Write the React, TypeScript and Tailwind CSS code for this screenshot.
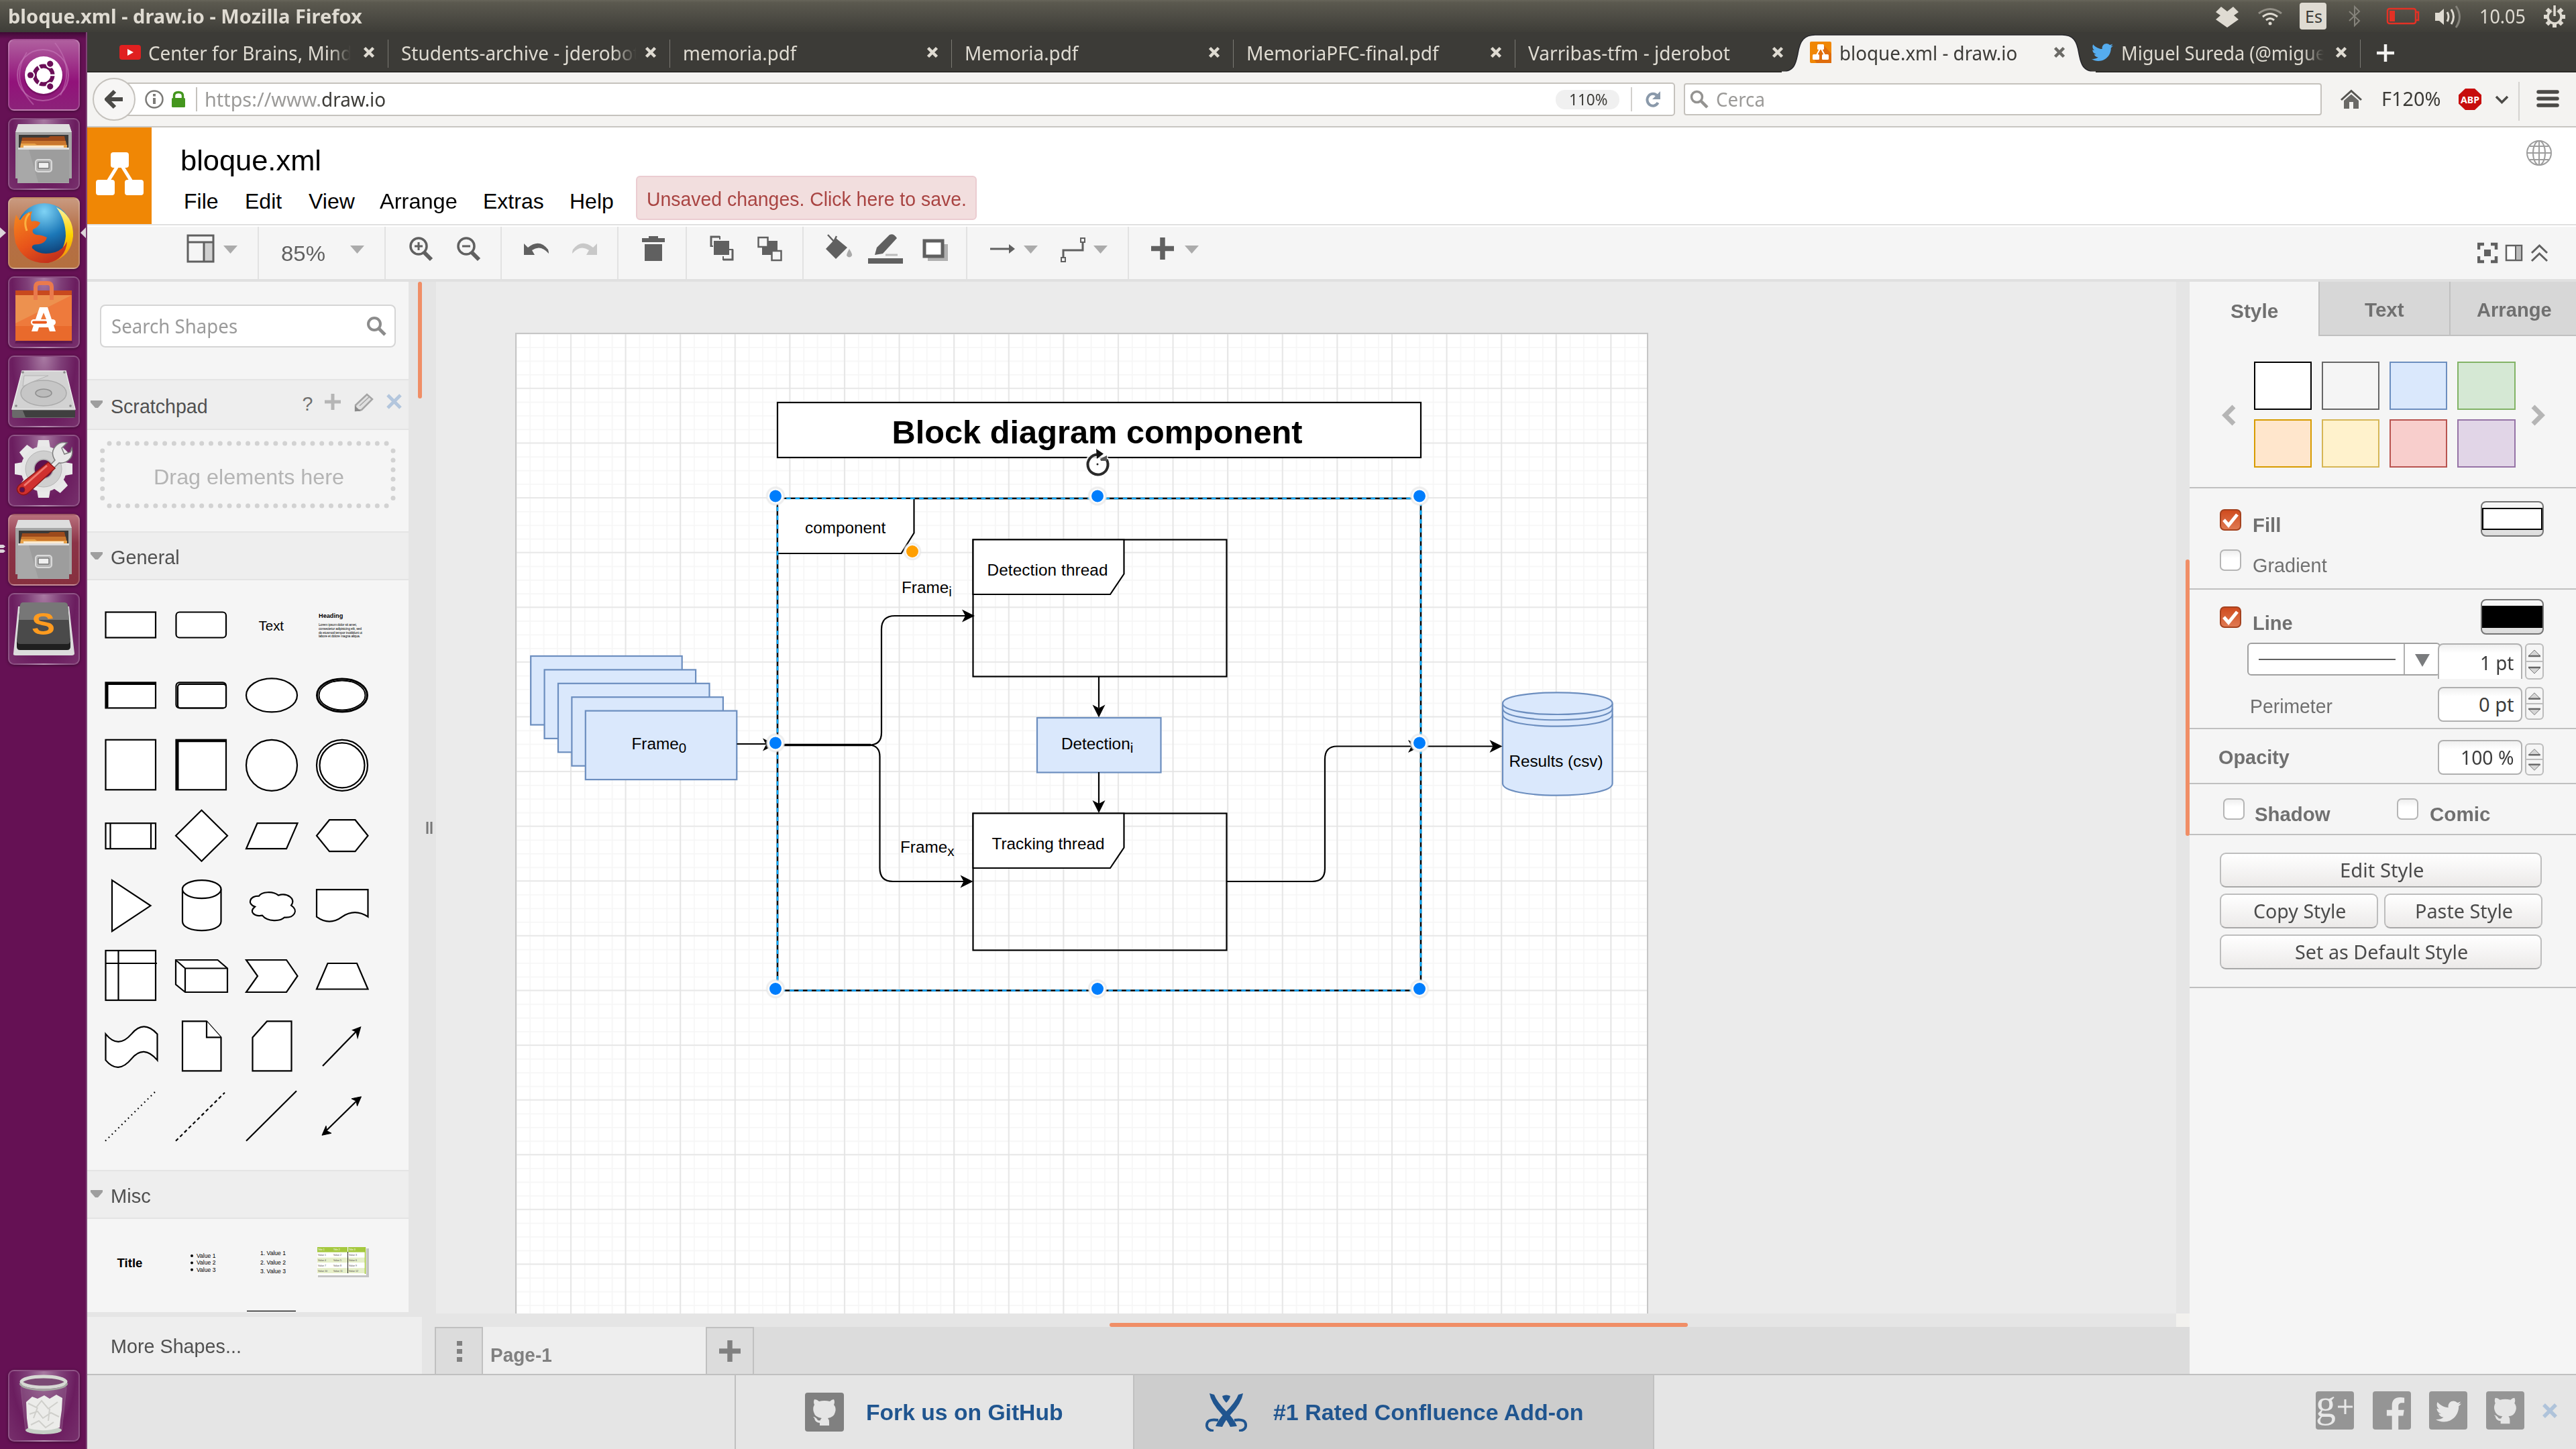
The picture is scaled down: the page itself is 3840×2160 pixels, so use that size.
import React, { useLayoutEffect, useRef, useState } from "react";
import { FaTwitter, FaFacebookF } from "react-icons/fa";

const UB = "font-['Noto_Sans',sans-serif]";
const AR = "font-['Liberation_Sans',sans-serif]";

/* Text squeezed or stretched to a given ink width. */
function Fit({ w, className = "", children }: { w: number; className?: string; children: React.ReactNode }) {
  const ref = useRef<HTMLSpanElement>(null);
  const [s, setS] = useState(1);
  useLayoutEffect(() => {
    if (ref.current && ref.current.offsetWidth) setS((w + 2) / ref.current.offsetWidth);
  }, [w]);
  return (
    <span className={"block shrink-0 whitespace-nowrap " + className} style={{ width: w }}>
      <span ref={ref} className="inline-block origin-left" style={{ transform: `scaleX(${s})` }}>
        {children}
      </span>
    </span>
  );
}

/* ---------- Launcher ---------- */

function Tile({ tint, children }: { tint: string; children: React.ReactNode }) {
  return (
    <div className={"ml-[12px] h-[107px] w-[107px] shrink-0 rounded-[9px] border-2 border-white/20 shadow-[0_1px_4px_rgba(0,0,0,0.4)] " + tint}>
      <svg viewBox="2 2 103 103" className="block h-full w-full">{children}</svg>
    </div>
  );
}

const glass = "bg-[radial-gradient(ellipse_at_50%_0%,#a97ba3_0%,#7f3f78_35%,#6b1d5f_65%,#77306c_100%)]";

function Cabinet() {
  return (
    <>
      <path d="M15 9 H91 L95 22 V90 H11 V22Z" fill="#a5a5a5" />
      <path d="M15 9 H91 L95 21 H11Z" fill="#dedede" />
      <rect x="16" y="25" width="74" height="30" fill="#3c3a38" />
      <path d="M21 29 H60 L63 27 H84 L87 40 H19Z" fill="#9c4a1c" />
      <path d="M20 34 H86 L88 44 H18Z" fill="#c9762e" />
      <path d="M19 38 H40 L43 40 H88 V48 H18Z" fill="#e8a34b" />
      <path d="M23 41 H83 V44 H23Z" fill="#fbe9d0" />
      <path d="M15 44 H91 V97 H14Z" fill="#a8a8a8" />
      <path d="M15 44 H91 V47 H15Z" fill="#dcdcdc" />
      <path d="M31 47 L45 96 H91 V47Z" fill="#989898" opacity="0.7" />
      <rect x="41" y="62" width="24" height="18" rx="4" fill="#b5b5b5" stroke="#dadada" strokeWidth="2" />
      <rect x="45" y="66" width="16" height="9" rx="1" fill="#f0f0f0" stroke="#777" strokeWidth="1.5" />
    </>
  );
}

function Launcher() {
  const teeth = [0, 45, 90, 135, 180, 225, 270, 315];
  return (
    <div className="flex w-[130px] shrink-0 flex-col border-r-2 border-[#7f4576] bg-[#651154] bg-[linear-gradient(#3e0a34_0px,#651154_10px)] pt-[10px]">
      <div className="flex flex-col gap-[11px]">
        <Tile tint="bg-[linear-gradient(#b0609f,#92127a_60%,#8c2279)]">
          <ellipse cx="52" cy="54" rx="38" ry="38" fill="none" stroke="#c77bb9" strokeWidth="2" opacity="0.6" />
          <path d="M70 6 Q100 44 78 84 M28 20 Q2 60 38 98" fill="none" stroke="#c77bb9" strokeWidth="2" opacity="0.5" />
          <circle cx="53" cy="56" r="29" fill="#5a0b4b" opacity="0.4" />
          <circle cx="53" cy="54" r="28" fill="#fff" />
          <circle cx="53" cy="54" r="13.5" fill="none" stroke="#6b0f58" strokeWidth="6" />
          <path d="M53 54 L66 54 H76 M53 54 L43 36 M53 54 L43 72" stroke="#fff" strokeWidth="2.5" />
          {[180, 60, 300].map((a) => (
            <g key={a} transform={`rotate(${a} 53 54)`}>
              <circle cx="72.5" cy="54" r="6.5" fill="#fff" />
              <circle cx="72.5" cy="54" r="4.6" fill="#6b0f58" />
            </g>
          ))}
        </Tile>
        <Tile tint={glass}><Cabinet /></Tile>
        <div className="relative">
          <Tile tint="bg-[linear-gradient(#c99a80,#b56f47_45%,#b4703f)]">
            <defs>
              <radialGradient id="globe" cx="0.5" cy="0.15" r="0.9"><stop offset="0" stopColor="#7fd3f5" /><stop offset="0.5" stopColor="#1c78b8" /><stop offset="1" stopColor="#0b2f63" /></radialGradient>
              <linearGradient id="fox" x1="0" y1="0" x2="0.6" y2="1"><stop offset="0" stopColor="#f58a1f" /><stop offset="0.6" stopColor="#e8541a" /><stop offset="1" stopColor="#c5331c" /></linearGradient>
              <linearGradient id="tail" x1="0" y1="0" x2="0" y2="1"><stop offset="0" stopColor="#fff2a0" /><stop offset="0.5" stopColor="#fdd400" /><stop offset="1" stopColor="#f08a10" /></linearGradient>
            </defs>
            <circle cx="54" cy="50" r="41" fill="url(#globe)" />
            <path d="M72 15 Q98 28 97 58 Q94 88 66 96 Q84 80 86 58 Q86 34 72 15Z" fill="url(#tail)" />
            <path d="M12 26 Q15 32 18 34 Q26 22 36 21 Q32 30 35 36 Q43 34 48 38 Q45 45 37 48 Q35 54 42 56 Q50 56 58 60 Q56 68 46 70 Q34 70 36 76 Q48 88 70 82 Q82 78 88 66 Q86 92 60 98 Q24 100 11 68 Q6 44 12 26Z" fill="url(#fox)" />
            <path d="M32 24 Q22 34 28 50" stroke="#fbb040" strokeWidth="3" fill="none" />
          </Tile>
          <svg viewBox="0 0 130 107" className="absolute left-0 top-0 h-[107px] w-[130px]">
            <path d="M0 45 L9 53 L0 61Z M128 45 L120 53 L128 61Z" fill="#dcd5da" />
          </svg>
        </div>
        <Tile tint={glass}>
          <path d="M12 96 H96 V100 H10Z" fill="#4a0d3e" opacity="0.5" />
          <path d="M11 21 H95 V30 H11Z" fill="#c8491e" />
          <path d="M11 28 H95 V96 H11Z" fill="#ee7a3c" />
          <path d="M11 28 H95 L11 70Z" fill="#eda05c" opacity="0.6" />
          <path d="M11 74 H95 V96 H11Z" fill="#e96a2c" />
          <path d="M41 35 V16 Q41 10 47 10 H59 Q65 10 65 16 V35" fill="none" stroke="#ea7a4c" strokeWidth="6" />
          <path d="M47 46 H59 L71 82 H62 L60 76 H46 L44 82 H35Z M53 54 L49 64 H57Z" fill="#fff" fillRule="evenodd" />
          <rect x="34" y="64" width="37" height="9" rx="4.5" fill="#fff" />
          <rect x="36" y="66.5" width="22" height="4" rx="2" fill="#e8591e" />
        </Tile>
        <Tile tint={glass}>
          <path d="M6 80 H100 V90 Q100 93 97 93 H9 Q6 93 6 90Z" fill="#6a6a6a" />
          <path d="M22 82 H100 V92 H26Z" fill="#3f3f3f" />
          <path d="M21 23 H86 L100 80 H6Z" fill="#d2d2d2" stroke="#ececec" strokeWidth="1.5" />
          <ellipse cx="53" cy="56" rx="34" ry="19" fill="#c6c6c6" stroke="#aaa" strokeWidth="1.5" />
          <ellipse cx="53" cy="56" rx="12" ry="6" fill="#bbb" stroke="#8f8f8f" strokeWidth="1.5" />
          <path d="M24 30 H60 L34 40 L22 46Z" fill="#dadada" stroke="#b5b5b5" />
          {[[22, 25], [84, 25], [12, 75], [93, 75]].map(([x, y]) => <circle key={x} cx={x} cy={y} r="1.8" fill="#888" />)}
        </Tile>
        <Tile tint={glass}>
          {teeth.map((a) => <path key={a} transform={`rotate(${a} 53 51)`} d="M43 20 L45 8 H61 L63 20Z" fill="#e9e9e9" />)}
          <circle cx="53" cy="51" r="34" fill="#e6e6e6" />
          <circle cx="53" cy="51" r="27" fill="#cfcfcf" stroke="#b5b5b5" />
          <circle cx="53" cy="51" r="14" fill="#5e124f" stroke="#aaa" strokeWidth="1.5" />
          <path d="M62 46 L70 38 Q62 26 72 16 Q78 10 88 12 L80 20 L84 29 L93 26 L95 20 Q98 32 90 38 Q84 43 76 42 L67 51Z" fill="#e8e8e8" stroke="#7d7d7d" strokeWidth="1.5" />
          <path d="M60 41 L70 50 L31 86 Q24 93 16 87 Q10 80 18 74Z" fill="#d0302f" stroke="#8e1718" strokeWidth="1.5" />
          <path d="M58 46 L24 76" stroke="#f07a70" strokeWidth="3" />
          <circle cx="21" cy="82" r="4" fill="#5e124f" stroke="#8e1718" />
        </Tile>
        <div className="relative">
          <Tile tint="bg-[linear-gradient(#b8707c,#8b3347_40%,#87303f)]"><Cabinet /></Tile>
          <svg viewBox="0 0 130 107" className="absolute left-0 top-0 h-[107px] w-[130px]">
            <path d="M0 46 H5 L8 48.500 L5 51 H0Z M0 53 H5 L8 55.500 L5 58 H0Z" fill="#dcd5da" />
          </svg>
        </div>
        <Tile tint={glass}>
          <path d="M15 20 H91 L99 90 Q99 93 95 93 H11 Q7 93 8 90Z" fill="#dcdcdc" />
          <path d="M13 72 H93 V80 Q93 85 88 85 H18 Q13 85 13 80Z" fill="#1f1f1f" />
          <path d="M22 14 H84 Q88 14 89 18 L93 70 Q93 76 88 76 H18 Q13 76 13 70 L18 18 Q19 14 22 14Z" fill="#4a4a4a" />
          <path d="M22 14 H84 Q88 14 89 18 L91 40 H16 L18 18 Q19 14 22 14Z" fill="#777" />
          <text x="35" y="62" fontSize="46" fontWeight="700" textLength="35" lengthAdjust="spacingAndGlyphs" fill="#ff9b1f" className={AR}>S</text>
        </Tile>
      </div>
      <div className="mb-[11px] mt-auto">
        <Tile tint={glass}>
          <path d="M19 26 L26 90 Q53 100 80 90 L87 26Z" fill="#9a6f95" opacity="0.35" stroke="#b698b2" />
          <ellipse cx="53" cy="90" rx="27" ry="6" fill="#c6cfc6" />
          <path d="M27 48 L36 40 L44 43 L54 38 L62 43 L72 37 L81 42 L80 60 L78 74 L77 86 Q53 94 30 87 L28 72Z" fill="#ececea" />
          <path d="M30 50 L42 56 L50 46 L60 58 L74 48 M32 66 L44 62 L52 72 L64 64 L76 70 M34 82 L46 76 L56 86 L68 78 M44 56 L38 72 M62 58 L60 76" stroke="#cfcfcb" strokeWidth="2" fill="none" />
          <ellipse cx="53" cy="18" rx="33" ry="8" fill="#7b4a74" stroke="#d7d9d4" strokeWidth="5" />
          <path d="M18 20 Q20 29 53 30 Q86 29 88 20" fill="none" stroke="#a5a8a2" strokeWidth="3" />
        </Tile>
      </div>
    </div>
  );
}

/* ---------- System bar ---------- */

function TopBar() {
  return (
    <div className={"flex h-[48px] w-full shrink-0 bg-[linear-gradient(#67655a,#5b594f_8%,#3e3d38)] text-[28.5px] leading-[48px] text-[#dfdbd2] " + UB}>
      <Fit w={526} className="ml-[12px] font-bold">bloque.xml - draw.io - Mozilla Firefox</Fit>
      <svg viewBox="3300 0 128 48" className="ml-auto h-[48px] w-[128px] shrink-0">
        <g fill="#dfdbd2">
          <path d="M3311 10 L3320 17 L3329 10 L3337 18 L3330 23 L3337 29 L3320 41 L3303 29 L3310 23 L3303 18Z" />
          <circle cx="3384" cy="35" r="2.5" />
          <g fill="none" stroke="#dfdbd2" strokeWidth="3">
            <path d="M3378 30 Q3384 25 3390 30" />
            <path d="M3373 25 Q3384 16 3395 25" />
            <path d="M3367 20 Q3384 7 3401 20" opacity="0.45" />
          </g>
        </g>
      </svg>
      <div className="flex h-[40px] w-[40px] shrink-0 items-center justify-center self-center rounded-[4px] bg-[#dfdbd2] text-[25px] leading-[40px] text-[#3c3b37]">
        <Fit w={24}>Es</Fit>
      </div>
      <svg viewBox="3468 0 228 48" className="h-[48px] w-[228px] shrink-0">
        <path d="M3502 17 L3517 31 L3510 38 V10 L3517 17 L3502 31" fill="none" stroke="#84827a" strokeWidth="2" />
        <rect x="3559" y="13" width="42" height="22" rx="3" fill="none" stroke="#e33125" strokeWidth="2.5" />
        <path d="M3602 18 H3605 V30 H3602" fill="none" stroke="#e33125" strokeWidth="2.5" />
        <rect x="3562" y="16" width="8" height="16" fill="#e33125" />
        <path d="M3630 19 H3636 L3643 13 V37 L3636 31 H3630Z" fill="#dfdbd2" />
        <path d="M3648 18 Q3652 25 3648 32 M3654 14 Q3661 25 3654 36" fill="none" stroke="#dfdbd2" strokeWidth="3" />
        <path d="M3661 9 Q3672 25 3661 41" fill="none" stroke="#84827a" strokeWidth="3" />
      </svg>
      <Fit w={67}>10.05</Fit>
      <svg viewBox="3763 0 77 48" className="h-[48px] w-[77px] shrink-0">
        <circle cx="3808" cy="25" r="10" fill="none" stroke="#dfdbd2" strokeWidth="3.5" />
        {[45, 90, 135, 180, 225, 270, 315].map((a) => (
          <rect key={a} x="3805" y="9" width="6" height="5" fill="#dfdbd2" transform={`rotate(${a} 3808 25)`} />
        ))}
        <rect x="3803.5" y="7" width="9" height="10" fill="#504e46" />
        <rect x="3806.3" y="8" width="3.5" height="16" fill="#dfdbd2" />
      </svg>
    </div>
  );
}

/* ---------- Browser tabs ---------- */

function Close({ c = "#dfdbd2" }: { c?: string }) {
  return (
    <svg viewBox="0 0 18 18" className="h-[18px] w-[18px] shrink-0 self-center">
      <path d="M2.5 2.5 L15.5 15.5 M15.5 2.5 L2.5 15.5" stroke={c} strokeWidth="4.5" />
    </svg>
  );
}

function Tab({ title, w, box = 352, icon, fade, last }: { title: string; w: number; box?: number; icon?: React.ReactNode; fade?: boolean; last?: boolean }) {
  return (
    <div className="flex h-[60px] w-[420px] shrink-0 pl-[19px] pr-[20px]">
      {icon}
      <div className={"shrink-0 " + (fade ? "[mask-image:linear-gradient(to_right,black_88%,transparent_98%)]" : "")} style={{ width: box }}>
        <Fit w={w}>{title}</Fit>
      </div>
      <span className="ml-auto flex"><Close /></span>
      {!last && <span className="-mr-[20px] ml-[19px] mt-[11px] h-[42px] w-px bg-[#7b7973]" />}
    </div>
  );
}

function DrawioMark() {
  return (
    <svg viewBox="0 0 32 32" className="h-[32px] w-[32px] shrink-0 self-center">
      <rect width="32" height="32" rx="2" fill="#f08705" />
      <path d="M20 5 L32 18 V32 H10 L6 26Z" fill="#df6c0c" />
      <path d="M16 9 L9 22 M16 9 L23 22" stroke="#fff" strokeWidth="2" />
      <rect x="11" y="4" width="10" height="8" rx="1.5" fill="#fff" />
      <rect x="4" y="19" width="10" height="8" rx="1.5" fill="#fff" />
      <rect x="18" y="19" width="10" height="8" rx="1.5" fill="#fff" />
    </svg>
  );
}

function TabStrip() {
  return (
    <div className={"flex h-[60px] shrink-0 bg-[#3c3b37] pl-[29px] text-[28.5px] leading-[62px] text-[#dfdbd2] shadow-[inset_0_-2px_0_#2b2a26] " + UB}>
      <Tab title="Center for Brains, Mind" w={302} box={308} fade icon={
        <svg viewBox="0 0 32 22" className="mr-[11px] h-[22px] w-[32px] shrink-0 self-center">
          <rect width="32" height="22" rx="4" fill="#e02020" /><path d="M12 6 L21 11 L12 16Z" fill="#fff" />
        </svg>} />
      <Tab title="Students-archive - jderobot" w={354} box={358} fade />
      <Tab title="memoria.pdf" w={167} />
      <Tab title="Memoria.pdf" w={167} />
      <Tab title="MemoriaPFC-final.pdf" w={285} />
      <Tab title="Varribas-tfm - jderobot" w={299} last />
      <div className="relative flex h-[60px] w-[420px] shrink-0 pl-[19px] pr-[20px] text-[#3c3b37]">
        <svg viewBox="2656 48 468 60" className="absolute -left-[23px] top-0 h-[60px] w-[468px]">
          <path d="M2654 108 C2676 106 2677 94 2680 80 C2683 60 2690 52 2706 52 H3074 C3090 52 3096 60 3099 80 C3102 94 3103 106 3126 108Z" fill="#f4f3f1" stroke="#26262b" strokeWidth="1.5" />
          <path d="M2656 107.5 H3124" stroke="#f4f3f1" strokeWidth="2" />
        </svg>
        <span className="relative flex"><DrawioMark /></span>
        <Fit w={263} className="relative ml-[12px]">bloque.xml - draw.io</Fit>
        <span className="relative ml-auto flex"><Close c="#6b6a66" /></span>
      </div>
      <Tab title="Miguel Sureda (@migue" w={303} box={308} fade icon={<FaTwitter className="relative mr-[12px] h-[32px] w-[32px] shrink-0 self-center text-[#55acee]" />} />
      <svg viewBox="3519 48 80 60" className="h-[60px] w-[80px] shrink-0">
        <path d="M3556 66 V92 M3543 79 H3569" stroke="#f4f3f1" strokeWidth="4.5" />
      </svg>
    </div>
  );
}

/* ---------- Navigation bar ---------- */

function NavBar() {
  return (
    <div className={"flex h-[82px] shrink-0 items-start border-b-2 border-[#c8c6c2] bg-[#f4f3f1] text-[28.5px] leading-[78px] text-[#3c3b37] " + UB}>
      <div className="relative z-10 -mr-[12px] ml-[8px] mt-[8px] flex h-[64px] w-[64px] shrink-0 items-center justify-center rounded-full border-2 border-[#c5c2bd] bg-[#f7f6f5]">
        <svg viewBox="0 0 28 30" className="h-[30px] w-[28px]"><path d="M27 15 H5 M15 3 L3 15 L15 27" fill="none" stroke="#4b4a47" strokeWidth="6" /></svg>
      </div>
      <div className="mt-[15px] flex h-[50px] w-[2307px] shrink-0 items-center rounded-r-[5px] border-2 border-[#c5c2bd] bg-white leading-[46px]">
        <svg viewBox="192 125 113 46" className="h-[46px] w-[113px] shrink-0">
          <circle cx="230" cy="148" r="12.5" fill="none" stroke="#7b7a77" strokeWidth="2.5" />
          <path d="M230 146 V155 M230 140 V143.500" stroke="#7b7a77" strokeWidth="4" />
          <rect x="256" y="146" width="20" height="14" rx="1.5" fill="#44961e" />
          <path d="M259.500 147 V143 Q259.500 137.500 266 137.500 Q272.500 137.500 272.500 143 V147" fill="none" stroke="#44961e" strokeWidth="3.5" />
          <path d="M293 130 V166" stroke="#c5c2bd" strokeWidth="2" />
        </svg>
        <Fit w={172} className="text-[#9b9a98]">https://www.</Fit>
        <Fit w={94} className="ml-[2px]">draw.io</Fit>
        <div className="ml-auto flex h-[29px] w-[95px] items-center justify-center rounded-[14px] bg-[#f0f0f0] text-[23px] leading-[29px]"><Fit w={56}>110%</Fit></div>
        <div className="ml-[17px] h-[36px] w-[2px] bg-[#d2d0cd]" />
        <svg viewBox="0 0 26 26" className="ml-[18px] mr-[18px] h-[26px] w-[26px]">
          <path d="M19.500 8 A8.500 9 0 1 0 20.500 18" fill="none" stroke="#8a99aa" strokeWidth="4" />
          <path d="M24 1 V13 H12Z" fill="#8a99aa" />
        </svg>
      </div>
      <div className="ml-[13px] mt-[16px] flex h-[48px] w-[951px] shrink-0 items-center rounded-[4px] border-2 border-[#c5c2bd] bg-white leading-[45px] text-[#9b9a98]">
        <svg viewBox="0 0 28 28" className="ml-[7px] h-[28px] w-[28px]">
          <circle cx="10.5" cy="10.5" r="8" fill="none" stroke="#949391" strokeWidth="3.5" /><path d="M16 16 L26 26" stroke="#949391" strokeWidth="4.5" />
        </svg>
        <Fit w={71} className="ml-[11px]">Cerca</Fit>
      </div>
      <svg viewBox="3461 108 89 80" className="h-[80px] w-[89px] shrink-0">
        <path d="M3490 149 L3505 135.500 L3520 149" fill="none" stroke="#555450" strokeWidth="3" />
        <path d="M3494 150 L3505 140.500 L3516 150 V162 H3508 V152 H3502 V162 H3494Z" fill="#6a6966" />
      </svg>
      <Fit w={86}>F120%</Fit>
      <div className="ml-[29px] flex h-[80px] w-[34px] shrink-0 items-center">
        <svg viewBox="0 0 34 32" className="h-[32px] w-[34px]">
          <path d="M10 0 H24 L34 9.500 V22.500 L24 32 H10 L0 22.500 V9.500Z" fill="#c70d0d" />
          <text x="3" y="21.5" fontSize="15" fontWeight="700" textLength="28" lengthAdjust="spacingAndGlyphs" fill="#fff">ABP</text>
        </svg>
      </div>
      <svg viewBox="3699 108 141 80" className="h-[80px] w-[141px] shrink-0">
        <path d="M3721 144 L3729.500 152.500 L3738 144" fill="none" stroke="#4b4a47" strokeWidth="3.5" />
        <path d="M3755 122 V180" stroke="#d5d3d0" strokeWidth="2" />
        <path d="M3784 137 H3812 M3784 147 H3812 M3784 157 H3812" stroke="#4b4a47" strokeWidth="5.5" strokeLinecap="round" />
      </svg>
    </div>
  );
}

/* ---------- draw.io header & toolbar ---------- */

function Header() {
  return (
    <div className={"flex h-[144px] shrink-0 bg-white text-black " + AR}>
      <svg viewBox="130 190 96 144" className="h-[144px] w-[96px] shrink-0">
        <rect x="130" y="190" width="96" height="144" fill="#f08705" />
        <path d="M176 246 L160 272 M181 246 L197 272" stroke="#fff" strokeWidth="5" />
        <rect x="165" y="227" width="27" height="23" rx="4" fill="#fff" />
        <rect x="143" y="268" width="28" height="23" rx="4" fill="#fff" />
        <rect x="186" y="268" width="28" height="23" rx="4" fill="#fff" />
      </svg>
      <div className="ml-[43px] flex flex-col">
        <Fit w={208} className="mt-[24px] text-[43px] leading-[50px]">bloque.xml</Fit>
        <div className="mt-[16px] flex text-[32px] leading-[40px]">
          <Fit w={50} className="ml-[5px]">File</Fit>
          <Fit w={53} className="ml-[41px]">Edit</Fit>
          <Fit w={67} className="ml-[42px]">View</Fit>
          <Fit w={114} className="ml-[39px]">Arrange</Fit>
          <Fit w={89} className="ml-[40px]">Extras</Fit>
          <Fit w={64} className="ml-[40px]">Help</Fit>
        </div>
      </div>
      <div className="ml-[35px] mt-[72px] flex h-[66px] w-[508px] items-center rounded-[6px] border-2 border-[#ebccd1] bg-[#f2dede] pl-[14px] pt-[4px] text-[29px] leading-[60px] text-[#a94442]">
        <Fit w={475}>Unsaved changes. Click here to save.</Fit>
      </div>
      <svg viewBox="0 0 40 40" className="ml-auto mr-[35px] mt-[18px] h-[40px] w-[40px]" fill="none" stroke="#9d9d9d" strokeWidth="2">
        <circle cx="20" cy="20" r="18" /><ellipse cx="20" cy="20" rx="9" ry="18" />
        <path d="M20 2 V38 M2 20 H38 M6 10 H34 M6 30 H34" />
      </svg>
    </div>
  );
}

function Ico({ x, w, ml, children }: { x: number; w: number; ml: string; children: React.ReactNode }) {
  return <svg viewBox={`${x} 338 ${w} 78`} width={w} height={78} className={"shrink-0 " + ml}>{children}</svg>;
}
function Caret({ ml }: { ml: string }) {
  return <svg viewBox="0 338 22 78" className={"h-[78px] w-[22px] shrink-0 " + ml}><path d="M0 366 H21 L10.500 378Z" fill="#ababab" /></svg>;
}
const grp = "flex h-[78px] shrink-0 border-r-2 border-[#e2e2e2] ";

function Toolbar() {
  const g = "#606060";
  return (
    <div className="flex h-[86px] shrink-0 border-b-4 border-t-2 border-[#e0e0e0] bg-[#f5f5f5]">
      <div className="flex w-full border-t-2 border-white">
        <div className={grp + "w-[256px]"}>
          <Ico x={278} w={42} ml="ml-[148px]">
            <path d="M304 360 H318 V390 H304Z" fill="#d0d0d0" />
            <path d="M280 351 H318 V390 H280Z M280 361 H318 M304 361 V390" fill="none" stroke={g} strokeWidth="3" />
          </Ico>
          <Caret ml="ml-[13px]" />
        </div>
        <div className={grp + "w-[189px] text-[31px] leading-[82px] text-[#606060] " + AR}>
          <Fit w={64} className="ml-[33px]">85%</Fit>
          <Caret ml="ml-[39px]" />
        </div>
        <div className={grp + "w-[173px]"}>
          <Ico x={610} w={36} ml="ml-[35px]">
            <circle cx="624" cy="367" r="12" fill="none" stroke={g} strokeWidth="3.5" /><path d="M632 376 L643 387" stroke={g} strokeWidth="6" /><path d="M618 367 H630 M624 361 V373" stroke={g} strokeWidth="3" />
          </Ico>
          <Ico x={681} w={36} ml="ml-[35px]">
            <circle cx="695" cy="367" r="12" fill="none" stroke={g} strokeWidth="3.5" /><path d="M703 376 L714 387" stroke={g} strokeWidth="6" /><path d="M689 367 H701" stroke={g} strokeWidth="3" />
          </Ico>
        </div>
        <div className={grp + "w-[174px]"}>
          <Ico x={781} w={38} ml="ml-[33px]"><path d="M781 363 L787 369 Q804 355 817 372 Q818 375 818 378 Q806 364 793 373 L797 380 L781 380Z" fill={g} /></Ico>
          <Ico x={853} w={38} ml="ml-[34px]"><path d="M890 363 L884 369 Q867 355 854 372 Q853 375 853 378 Q865 364 878 373 L874 380 L890 380Z" fill="#c8c8c8" /></Ico>
        </div>
        <div className={grp + "w-[102px]"}>
          <Ico x={957} w={34} ml="ml-[35px]"><path d="M957 355 H967 V352 H981 V355 H991 V361 H957Z M961 364 H987 V389 H961Z" fill={g} /></Ico>
        </div>
        <div className={grp + "w-[174px]"}>
          <Ico x={1057} w={38} ml="ml-[33px]">
            <path d="M1060 368 V353 H1073" fill="none" stroke={g} strokeWidth="3" /><rect x="1064" y="359" width="23" height="21" fill={g} /><path d="M1092 372 V387 H1078" fill="none" stroke={g} strokeWidth="3" />
            <path d="M1059 367 H1063 M1073 352 V357 M1087 372 H1093 M1078 382 V388" stroke={g} strokeWidth="2" />
          </Ico>
          <Ico x={1129} w={38} ml="ml-[34px]">
            <rect x="1136" y="359" width="23" height="21" fill={g} /><rect x="1130.5" y="354" width="14" height="14" fill="#f5f5f5" stroke={g} strokeWidth="2.5" /><rect x="1150.5" y="374" width="14" height="14" fill="#f5f5f5" stroke={g} strokeWidth="2.5" />
          </Ico>
        </div>
        <div className={grp + "w-[244px]"}>
          <Ico x={1231} w={40} ml="ml-[33px]">
            <path d="M1234 350 L1245 362 M1247 352 L1242 362" stroke={g} strokeWidth="2.5" /><path d="M1246 355 L1263 369 L1246 386 L1231 371Z" fill={g} /><path d="M1266 371 Q1271 379 1270 381 Q1266 386 1262 381 Q1262 378 1266 371Z" fill="#aaa" />
          </Ico>
          <Ico x={1294} w={52} ml="ml-[23px]">
            <path d="M1304 380 L1307 369 L1326 350 Q1332 347 1337 355 L1316 378Z" fill={g} /><path d="M1320 380 H1338" stroke="#bbb" strokeWidth="3" /><rect x="1294" y="385" width="52" height="8" fill={g} />
          </Ico>
          <Ico x={1375} w={40} ml="ml-[29px]">
            <path d="M1383 364 H1413 V389 H1383Z" fill="#b0b0b0" /><rect x="1378" y="359" width="27" height="23" fill="#fff" stroke={g} strokeWidth="5" />
          </Ico>
        </div>
        <div className={grp + "w-[241px]"}>
          <Ico x={1476} w={38} ml="ml-[34px]"><path d="M1476 371 H1507" stroke={g} strokeWidth="3" /><path d="M1504 364 L1513 371 L1504 378Z" fill={g} /></Ico>
          <Caret ml="ml-[12px]" />
          <Ico x={1581} w={38} ml="ml-[33px]">
            <path d="M1585 385 V373 H1614 V360" fill="none" stroke={g} strokeWidth="3" /><rect x="1582" y="384" width="6" height="6" fill="#f5f5f5" stroke={g} strokeWidth="2" /><rect x="1611" y="355" width="6" height="6" fill="#f5f5f5" stroke={g} strokeWidth="2" />
          </Ico>
          <Caret ml="ml-[11px]" />
        </div>
        <Ico x={1716} w={34} ml="ml-[33px]"><path d="M1733 354 V387 M1716 370.500 H1750" stroke={g} strokeWidth="7.5" /></Ico>
        <Caret ml="ml-[16px]" />
        <svg viewBox="3693 338 105 78" className="ml-auto mr-[42px] h-[78px] w-[105px] shrink-0">
          <path d="M3695 372 V364 H3703 M3713 364 H3721 V372 M3721 382 V390 H3713 M3703 390 H3695 V382" fill="none" stroke={g} strokeWidth="4.5" />
          <rect x="3703" y="372" width="10" height="10" fill={g} />
          <rect x="3736" y="366" width="23" height="22" fill="#fff" stroke={g} strokeWidth="2.5" /><rect x="3750" y="366" width="9" height="22" fill="#bbb" stroke={g} strokeWidth="2" />
          <path d="M3774 377 L3785.500 366 L3797 377 M3774 389 L3785.500 378 L3797 389" fill="none" stroke={g} strokeWidth="3" />
        </svg>
      </div>
    </div>
  );
}

/* ---------- Shape sidebar ---------- */

function SectionHead({ title, w, h, children }: { title: string; w: number; h: string; children?: React.ReactNode }) {
  return (
    <div className={"flex shrink-0 items-center border-y-2 border-[#e4e4e4] bg-[#eeeeee] text-[28.6px] text-[#505050] " + h}>
      <svg viewBox="0 0 18 12" className="ml-[5px] h-[12px] w-[18px]"><path d="M0 0 H18 V3 L11 11 H7 L0 3Z" fill="#9e9e9e" /></svg>
      <Fit w={w} className="ml-[12px] mt-[5px] leading-[50px]">{title}</Fit>
      {children}
    </div>
  );
}

const shapes: React.ReactNode[] = [
  <rect x="157.5" y="911.5" width="74.5" height="38" />,
  <rect x="262.5" y="911.5" width="74.5" height="38" rx="5" />,
  <text x="385.5" y="939" fontSize="20.5" fill="#000" stroke="none">Text</text>,
  <g fill="#000" stroke="none">
    <text x="475" y="920.5" fontSize="9.2" fontWeight="700">Heading</text>
    <g fontSize="5">
      <text x="475" y="932.5" textLength="57">Lorem ipsum dolor sit amet,</text>
      <text x="475" y="938.5" textLength="64">consectetur adipisicing elit, sed</text>
      <text x="475" y="944" textLength="65">do eiusmod tempor incididunt ut</text>
      <text x="475" y="949.5" textLength="62">labore et dolore magna aliqua.</text>
    </g>
  </g>,
  <><rect x="157.5" y="1016" width="74.5" height="38" /><path d="M159.500 1054 V1017.500 H232" strokeWidth="4" /></>,
  <><rect x="262.5" y="1016" width="74.5" height="38" rx="5" /><rect x="265" y="1018.5" width="72" height="35.5" rx="4" /></>,
  <ellipse cx="405" cy="1035" rx="38" ry="25" />,
  <><ellipse cx="510" cy="1035" rx="37.5" ry="24.5" strokeWidth="3" /><ellipse cx="510" cy="1035" rx="34.5" ry="22" strokeWidth="2" /></>,
  <rect x="157.5" y="1102" width="74.5" height="74.5" />,
  <><rect x="262.5" y="1102" width="74.5" height="74.5" /><path d="M264.500 1176 V1103.500 H337" strokeWidth="4" /></>,
  <circle cx="405" cy="1140" r="38" />,
  <><circle cx="510" cy="1140" r="38" /><circle cx="510" cy="1140" r="33.5" /></>,
  <><rect x="157.5" y="1226" width="74.5" height="38" /><path d="M164.500 1226 V1264 M225 1226 V1264" /></>,
  <path d="M300.500 1206.500 L339 1244.500 L300.500 1282.500 L262 1244.500Z" />,
  <path d="M383.500 1226 H443.500 L427 1264 H367Z" />,
  <path d="M491 1221 H529.500 L548.500 1244.500 L529.500 1268 H491 L472 1244.500Z" />,
  <path d="M167 1311.500 L224.500 1349.500 L167 1387.500Z" />,
  <><path d="M272 1325 V1373 C272 1391 329.500 1391 329.500 1373 V1325" /><ellipse cx="300.7" cy="1325" rx="28.8" ry="13.5" /></>,
  <path d="M386 1335 C372 1335 368 1347 380 1351 C370 1359 380 1366 391 1364 C399 1374 418 1373 424 1367 C438 1368 446 1357 434 1349 C442 1339 428 1330 415 1334 C406 1327 390 1329 386 1335Z" />,
  <path d="M472 1325.500 H548.500 V1366 Q529 1353 510 1366 Q491 1380 472 1366Z" />,
  <><rect x="157.5" y="1416" width="74.5" height="74" /><path d="M176.500 1416 V1491 M157 1435 H234" /></>,
  <><path d="M262 1430 H324.500 L339 1442.500 V1478 H276 L262 1466.500Z" /><path d="M262 1430 L276 1442.500 H339 M276 1442.500 V1478" /></>,
  <path d="M367 1430 H427 L443.500 1454 L427 1478 H367 L384 1454Z" />,
  <path d="M488.500 1435 H532 L548.500 1473.500 H472Z" />,
  <path d="M157.500 1540 Q176 1563 196 1540 Q214 1518 234.500 1540 V1579 Q214 1555 196 1577 Q176 1601 157.500 1579Z" />,
  <><path d="M272 1521 H308 L329.500 1545 V1595 H272Z" /><path d="M308 1521 V1545 H329.500" /></>,
  <path d="M398 1521 H434.500 V1595 H376.500 V1545Z" />,
  <><path d="M481 1587.500 L534 1533" /><path d="M538.500 1528.500 L533 1548 L530.500 1537 L524 1534Z" fill="#000" stroke="none" /></>,
  <path d="M157 1700 L233 1625" strokeDasharray="1.8 5" />,
  <path d="M262 1700 L335 1628" strokeDasharray="5 4" />,
  <path d="M367 1700 L442 1625.500" />,
  <><path d="M485 1686 L533 1639" /><path d="M538.500 1634 L532.500 1648 L531 1640.500 L524 1637Z M480 1691.500 L486 1677.500 L487.500 1685 L494 1688.500Z" fill="#000" stroke="#000" strokeWidth="1" /></>,
];

function MiscCells() {
  const rows = [0, 1, 2, 3, 4];
  return (
    <div className="flex h-[138px] shrink-0 overflow-hidden">
      <svg viewBox="130 1818 479 138" className="h-[138px] w-[479px] font-['Liberation_Sans',sans-serif]">
        <text x="174.5" y="1890" fontSize="17.6" fontWeight="700" textLength="38" lengthAdjust="spacingAndGlyphs">Title</text>
        {["Value 1", "Value 2", "Value 3"].map((v, i) => (
          <g key={v} fontSize="8.6">
            <circle cx="286" cy={1873 + i * 10.4} r="2" />
            <text x="293" y={1876 + i * 10.4}>{v}</text>
            <text x="388" y={1872 + i * 13.6}>{i + 1}. {v}</text>
          </g>
        ))}
        <rect x="474" y="1862" width="76" height="43" fill="#c4c4c4" />
        <rect x="473" y="1860" width="73" height="42" fill="#fff" />
        {rows.map((r) => (
          <g key={r}>
            <rect x="473" y={1860 + r * 7.8} width="71" height="7.8" fill={r === 0 ? "#a5c93f" : r % 2 ? "#fff" : "#e6efc9"} />
            {[0, 1, 2].map((c) => (
              <text key={c} x={474 + c * 23} y={1865 + r * 7.9} fontSize="3.6" fill={r ? "#444" : "#fff"}>
                {r ? "Value " + ((r - 1) * 3 + c + 1) : "Title " + (c + 1)}
              </text>
            ))}
          </g>
        ))}
        <path d="M518.500 1867 V1899" stroke="#222" strokeWidth="1" /><path d="M518.500 1860 V1867" stroke="#fff" strokeWidth="1" />
        <path d="M544.500 1860 V1900" stroke="#9fc532" strokeWidth="1.5" />
        <path d="M368 1955.500 H441" stroke="#000" strokeWidth="1.5" />
      </svg>
    </div>
  );
}

function Sidebar() {
  return (
    <div className={"flex w-[520px] shrink-0 flex-col bg-[#e5e5e5] " + AR}>
      <div className="flex h-[1536px] shrink-0">
        <div className="flex w-[479px] shrink-0 flex-col overflow-hidden bg-[#f5f5f5]">
          <div className={"ml-[19px] mt-[34px] flex h-[64px] w-[441px] shrink-0 items-center rounded-[8px] border-2 border-[#d5d5d5] bg-white text-[28.5px] leading-[58px] text-[#9a9a9a] " + UB}>
            <Fit w={186} className="ml-[15px]">Search Shapes</Fit>
            <svg viewBox="0 0 30 30" className="ml-auto mr-[12px] h-[30px] w-[30px]"><circle cx="12" cy="12" r="9" fill="none" stroke="#8c8c8c" strokeWidth="4" /><path d="M18 18 L28 28" stroke="#8c8c8c" strokeWidth="5" /></svg>
          </div>
          <div className="h-[47px] shrink-0" />
          <SectionHead title="Scratchpad" w={143} h="h-[76px]">
            <svg viewBox="445 567 164 72" className="ml-auto h-[72px] w-[164px] font-['Liberation_Sans',sans-serif]">
              <text x="450.5" y="611.5" fontSize="28.6" fill="#707070">?</text>
              <path d="M496 587 V611 M484 599 H508" stroke="#b5b5b5" strokeWidth="5" />
              <path d="M530 604 L547 588 L555 595 L539 611 L530 612Z" fill="#e0e0e0" stroke="#a5a5a5" strokeWidth="2.5" /><path d="M529 605 L538 613 H529Z" fill="#8a8a8a" /><path d="M536 605 L550 592" stroke="#a5a5a5" strokeWidth="1.5" />
              <path d="M578 589 L597 608 M597 589 L578 608" stroke="#b3c6dd" strokeWidth="5" />
            </svg>
          </SectionHead>
          <div className="relative ml-[19px] mt-[16px] flex h-[101px] w-[441px] shrink-0 items-center justify-center text-[32px] text-[#b4b4b4]">
            <svg viewBox="149 658 441 101" className="absolute inset-0 h-full w-full" stroke="#d2d2d2" strokeWidth="7" strokeLinecap="round">
              <path d="M163 662 H577 M163 755 H577" strokeDasharray="0 13.77" />
              <path d="M152.700 673 V744 M586 673 V744" strokeDasharray="0 14.1" />
            </svg>
            <Fit w={282} className="pt-[6px] leading-[50px]">Drag elements here</Fit>
          </div>
          <div className="h-[34px] shrink-0" />
          <SectionHead title="General" w={101} h="h-[73px]" />
          <div className="ml-[12px] mt-[14px] grid w-[420px] shrink-0 grid-cols-4">
            {shapes.map((s, i) => (
              <svg key={i} viewBox={`${142 + (i % 4) * 105} ${878 + Math.floor(i / 4) * 104.6} 105 104.6`} className="block h-[104.6px] w-[105px] overflow-visible font-['Liberation_Sans',sans-serif]" fill={i >= 27 ? "none" : "#fff"} stroke="#000" strokeWidth="2.2">
                {s}
              </svg>
            ))}
          </div>
          <div className="h-[28px] shrink-0" />
          <SectionHead title="Misc" w={58} h="h-[73px]" />
          <MiscCells />
        </div>
        <div className="ml-[14px] h-[174px] w-[6px] shrink-0 rounded-[3px] bg-[#f08e66]" />
        <svg viewBox="0 0 10 18" className="ml-[6px] mt-[805px] h-[18px] w-[10px]"><path d="M2 0 V18 M8 0 V18" stroke="#777" strokeWidth="3" /></svg>
      </div>
      <div className="mt-[7px] flex h-[85px] w-[499px] items-center bg-[#eeeeee] text-[28.6px] text-[#505050]">
        <Fit w={193} className="ml-[35px] mt-[3px] leading-[50px]">More Shapes...</Fit>
      </div>
    </div>
  );
}

/* ---------- Diagram canvas ---------- */

function Head({ x, y, r = 0 }: { x: number; y: number; r?: number }) {
  return <path d={`M${x} ${y} l-19 -9.5 l5 9.5 l-5 9.5Z`} transform={`rotate(${r} ${x} ${y})`} fill="#000" />;
}

function Diagram() {
  const handles = [[1156, 739.5], [1636, 739.5], [2116, 739.5], [1156, 1107.5], [2116, 1107.5], [1156, 1474], [1636, 1474], [2116, 1474]];
  return (
    <svg viewBox="650 420 2594 1538" className="block h-[1538px] w-[2594px] shrink-0 font-['Liberation_Sans',sans-serif]">
      <defs>
        <pattern id="minor" x="768.9" y="496.7" width="20.4" height="20.4" patternUnits="userSpaceOnUse"><path d="M0 0.700 H20.400 M0.700 0 V20.400" stroke="#f6f6f6" strokeWidth="2" /></pattern>
        <pattern id="major" x="768.3" y="496.2" width="81.6" height="81.6" patternUnits="userSpaceOnUse"><path d="M0 1 H81.600 M1 0 V81.600" stroke="#e3e3e3" strokeWidth="1.6" /></pattern>
        <radialGradient id="halo"><stop offset="0.65" stopColor="#fff" /><stop offset="0.82" stopColor="#ececec" /><stop offset="1" stopColor="#ddd" stopOpacity="0" /></radialGradient>
      </defs>
      <rect x="650" y="420" width="2594" height="1538" fill="#ebebeb" />
      <rect x="769" y="497" width="1687" height="1480" fill="#fff" />
      <rect x="769" y="497" width="1687" height="1480" fill="url(#minor)" />
      <rect x="769" y="497" width="1687" height="1480" fill="url(#major)" />
      <rect x="769" y="497" width="1687" height="1480" fill="none" stroke="#c6c6c6" strokeWidth="2" />

      <g stroke="#000" strokeWidth="2.2" fill="#fff">
        <rect x="1159" y="600" width="959" height="82" />
        <g fill="none"><rect x="1159" y="743" width="959" height="733.5" strokeWidth="2.6" /></g>
        <path d="M1159 743 H1362.500 V794.500 L1343.500 825 H1159Z" />
        <g fill="none"><rect x="1450.5" y="804.5" width="378" height="204" /><rect x="1450.5" y="1212.5" width="378" height="204" /></g>
        <path d="M1450.500 804.500 H1675.500 V855.500 L1655 886 H1450.500Z" />
        <path d="M1450.500 1212.500 H1675.500 V1263.500 L1655 1294 H1450.500Z" />
      </g>
      <g stroke="#6c8ebf" strokeWidth="2.2" fill="#dae8fc">
        {[0, 1, 2, 3, 4].map((i) => <rect key={i} x={791.2 + i * 20.4} y={978 + i * 20.4} width="225.5" height="102.5" />)}
        <rect x="1546" y="1070" width="184.5" height="81.5" />
        <path d="M2240 1049 V1168 C2240 1191.500 2403.600 1191.500 2403.600 1168 V1049" />
        <path d="M2240 1065 C2240 1088.500 2403.600 1088.500 2403.600 1065 M2240 1056 C2240 1079 2403.600 1079 2403.600 1056" fill="none" />
        <path d="M2240 1048.500 C2240 1027 2403.600 1027 2403.600 1048.500 C2403.600 1070.500 2240 1070.500 2240 1048.500Z" />
      </g>

      <g fill="none" stroke="#000" strokeWidth="2.2">
        <path d="M1098.500 1109 H1145" />
        <path d="M1160 1110.500 H1298" strokeWidth="3.6" />
        <path d="M1290 1110.500 H1296 Q1314 1110.500 1314 1092 V938 Q1314 918 1334 918 H1440" />
        <path d="M1290 1110.500 H1294 Q1311.500 1110.500 1311.500 1128 V1294 Q1311.500 1314 1331 1314 H1438" />
        <path d="M1638 1009 V1055 M1638 1151 V1198" />
        <path d="M1829 1314 H1956 Q1975 1314 1975 1295 V1132 Q1975 1112.500 1993 1112.500 H2104" />
        <path d="M2118 1112.500 H2226" />
      </g>
      <Head x={1156} y={1110} /><Head x={1453} y={918} /><Head x={1450.5} y={1314} />
      <Head x={1638} y={1069.5} r={90} /><Head x={1638} y={1212} r={90} />
      <Head x={2118} y={1112.5} /><Head x={2239.5} y={1112.5} />

      <text x="1329.5" y="660.5" fontSize="49" fontWeight="700" textLength="612" lengthAdjust="spacingAndGlyphs">Block diagram component</text>
      <g fontSize="24.3">
        <text x="1200" y="795">component</text>
        <text x="1471.5" y="858" textLength="180">Detection thread</text>
        <text x="1478.5" y="1266" textLength="168">Tracking thread</text>
        <text x="1344" y="884">Frame<tspan dy="5" fontSize="20.5">i</tspan></text>
        <text x="1342" y="1271">Frame<tspan dy="5" fontSize="20.5">x</tspan></text>
        <text x="941.5" y="1117">Frame<tspan dy="5" fontSize="20.5">0</tspan></text>
        <text x="1582" y="1117">Detection<tspan dy="5" fontSize="20.5">i</tspan></text>
        <text x="2249.5" y="1143" textLength="140">Results (csv)</text>
      </g>

      <rect x="1159" y="743" width="959" height="733.5" fill="none" stroke="#00a8ff" strokeWidth="2.6" strokeDasharray="6.6 6.6" />
      {handles.map(([x, y], i) => (
        <g key={i}><circle cx={x} cy={y} r="15" fill="url(#halo)" /><circle cx={x} cy={y} r="9" fill="#007dfc" /></g>
      ))}
      <circle cx="1360" cy="822" r="14" fill="url(#halo)" /><circle cx="1360" cy="822" r="9" fill="#ff9f00" />
      <circle cx="1636" cy="692.5" r="19" fill="#fff" opacity="0.85" />
      <path d="M1649.500 685 A15 15 0 1 1 1636 677.500" fill="none" stroke="#2a2a2a" strokeWidth="4" />
      <path d="M1634 669 L1645 676.500 L1635 684Z" fill="#111" />
      <path d="M1640 684 L1650 679 V687 H1641" fill="#555" /><circle cx="1636" cy="692" r="1.5" fill="#222" />
    </svg>
  );
}

function CanvasArea() {
  return (
    <div className={"flex w-[2614px] shrink-0 flex-col bg-[#e5e5e5] " + AR}>
      <div className="flex h-[1538px] shrink-0">
        <Diagram />
        <div className="ml-auto mt-[414px] h-[412px] w-[6px] rounded-[3px] bg-[#f08e66]" />
      </div>
      <div className="flex h-[20px] shrink-0 items-end">
        <div className="ml-[1004px] h-[6px] w-[862px] rounded-[3px] bg-[#f08e66]" />
        <div className="ml-auto h-[20px] w-[20px] bg-[#f2f1ee]" />
      </div>
      <div className="flex h-[70px] shrink-0 bg-[#dcdcdc] text-[28.6px] leading-[84px] text-[#808080]">
        <div className="-ml-[2px] w-[72px] border-2 border-b-0 border-[#c0c0c0]">
          <svg viewBox="0 0 68 68" className="h-[68px] w-[68px]"><path d="M31 19 H39 V26 H31Z M31 31 H39 V38 H31Z M31 43 H39 V50 H31Z" fill="#808080" /></svg>
        </div>
        <div className="w-[332px] bg-[#eeeeee]"><Fit w={90} className="ml-[11px] font-bold">Page-1</Fit></div>
        <div className="w-[72px] border-2 border-b-0 border-[#c0c0c0]">
          <svg viewBox="0 0 68 68" className="h-[68px] w-[68px]"><path d="M34 18 V50 M18 34 H50" stroke="#808080" strokeWidth="7.5" /></svg>
        </div>
      </div>
    </div>
  );
}

/* ---------- Format panel ---------- */

function Check({ on, ml }: { on?: boolean; ml: string }) {
  return (
    <svg viewBox="0 0 34 34" className={"h-[34px] w-[34px] shrink-0 " + ml}>
      <defs>
        <linearGradient id="ck" x1="0" y1="0" x2="0" y2="1"><stop offset="0" stopColor="#cf4a1d" /><stop offset="1" stopColor="#e07b54" /></linearGradient>
        <linearGradient id="un" x1="0" y1="0" x2="0" y2="1"><stop offset="0" stopColor="#ededed" /><stop offset="0.4" stopColor="#fff" /></linearGradient>
      </defs>
      <rect x="2" y="2" width="30" height="30" rx="6" fill={on ? "url(#ck)" : "url(#un)"} stroke={on ? "#a4421f" : "#b5b5b5"} strokeWidth="2" />
      {on && <path d="M7 17 L14 25 L27 9" fill="none" stroke="#fff" strokeWidth="5" />}
    </svg>
  );
}

function ColorButton({ black, mt }: { black?: boolean; mt: string }) {
  return (
    <div className={"ml-auto mr-[48px] flex h-[53px] w-[94px] shrink-0 flex-col justify-center rounded-[8px] border-2 border-[#757575] bg-[linear-gradient(#f8f8f8,#dddddd)] " + mt}>
      <div className={"h-[33px] border-2 border-black " + (black ? "bg-black" : "bg-white")} />
    </div>
  );
}

function Spin({ text, w, h = "h-[52px]", sh = "h-[49px]", smt = "", open }: { text: string; w: number; h?: string; sh?: string; smt?: string; open?: boolean }) {
  return (
    <div className={"relative z-10 flex shrink-0 " + UB}>
      <div className={"flex w-[126px] items-center justify-end border-2 border-[#b0b0b0] bg-[linear-gradient(#f0f0f0,#ffffff_25%)] pr-[13px] text-[29px] leading-[48px] text-[#3c3c3c] " + h + (open ? " rounded-t-[8px] border-b-0 pt-[3px]" : " rounded-[8px]")}>
        <Fit w={w}>{text}</Fit>
      </div>
      <div className={"ml-[4px] flex w-[28px] flex-col rounded-[6px] border-2 border-[#bcbcbc] " + sh + " " + smt}>
        <svg viewBox="0 0 24 22" className="h-1/2 w-full border-b border-[#bcbcbc]"><path d="M3 16 L12 7 L21 16Z" fill="#d5d5d5" stroke="#777" strokeWidth="1" /><path d="M3 16 H21" stroke="#666" strokeWidth="2.5" /></svg>
        <svg viewBox="0 0 24 22" className="h-1/2 w-full border-t border-[#bcbcbc]"><path d="M3 7 L12 16 L21 7Z" fill="#d5d5d5" stroke="#777" strokeWidth="1" /><path d="M3 7 H21" stroke="#666" strokeWidth="2.5" /></svg>
      </div>
    </div>
  );
}

function Btn({ w, cls, children }: { w: number; cls: string; children: string }) {
  return (
    <div className={"flex h-[52px] shrink-0 items-center justify-center rounded-[9px] border-2 border-[#bdbdbd] border-b-[#a8a8a8] bg-[linear-gradient(#ffffff,#eceae9)] text-[29px] leading-[48px] text-[#4b4b4b] " + UB + " " + cls}>
      <Fit w={w}>{children}</Fit>
    </div>
  );
}

const swatches = [
  "border-black bg-white", "border-[#666666] bg-[#f5f5f5]", "border-[#6c8ebf] bg-[#dae8fc]", "border-[#82b366] bg-[#d5e8d4]",
  "border-[#d79b00] bg-[#ffe6cc]", "border-[#d6b656] bg-[#fff2cc]", "border-[#b85450] bg-[#f8cecc]", "border-[#9673a6] bg-[#e1d5e7]",
];

function FormatPanel() {
  const sec = "shrink-0 border-b-2 border-[#c0c0c0] ";
  return (
    <div className={"flex w-[576px] shrink-0 flex-col bg-[#f5f5f5] text-[28.6px] leading-[34px] text-[#707070] " + AR}>
      <div className="flex h-[81px] shrink-0 font-bold leading-[88px]">
        <div className="w-[192px]"><Fit w={69} className="ml-[61px]">Style</Fit></div>
        <div className="w-[195px] border-b-2 border-l-2 border-[#c0c0c0] bg-[#d7d7d7] leading-[84px]"><Fit w={57} className="ml-[67px]">Text</Fit></div>
        <div className="w-[189px] border-b-2 border-l-2 border-[#c0c0c0] bg-[#d7d7d7] leading-[84px]"><Fit w={110} className="ml-[39px]">Arrange</Fit></div>
      </div>
      <div className={sec + "flex h-[227px] pl-[48px] pt-[38px]"}>
        <svg viewBox="0 0 22 32" className="mt-[64px] h-[32px] w-[22px]"><path d="M18 3 L5 16 L18 29" fill="none" stroke="#b5b5b5" strokeWidth="7" /></svg>
        <div className="ml-[26px] grid h-[158px] grid-cols-[86px_86px_86px_87px] grid-rows-[72px_72px] gap-x-[15px] gap-y-[14px]">
          {swatches.map((s) => <div key={s} className={"border-2 " + s} />)}
        </div>
        <svg viewBox="0 0 22 32" className="ml-[22px] mt-[64px] h-[32px] w-[22px]"><path d="M4 3 L17 16 L4 29" fill="none" stroke="#b5b5b5" strokeWidth="7" /></svg>
      </div>
      <div className={sec + "h-[151px]"}>
        <div className="flex h-[90px]">
          <Check on ml="ml-[44px] mt-[30px]" />
          <Fit w={40} className="ml-[16px] mt-[38px] font-bold">Fill</Fit>
          <ColorButton mt="mt-[19px]" />
        </div>
        <div className="flex">
          <Check ml="ml-[44px]" />
          <Fit w={109} className="ml-[16px] mt-[8px]">Gradient</Fit>
        </div>
      </div>
      <div className={sec + "h-[208px]"}>
        <div className="flex h-[79px]">
          <Check on ml="ml-[44px] mt-[24px]" />
          <Fit w={58} className="ml-[16px] mt-[33px] font-bold">Line</Fit>
          <ColorButton black mt="mt-[14px]" />
        </div>
        <div className="flex h-[66px]">
          <div className="ml-[86px] flex h-[49px] w-[288px] shrink-0 items-center rounded-[6px] border-2 border-[#a0a0a0] bg-white">
            <div className="ml-[15px] h-[2px] w-[204px] bg-[#606060]" />
            <div className="ml-[12px] h-full w-[2px] bg-[#b0b0b0]" />
            <svg viewBox="0 0 22 19" className="ml-[15px] mt-[4px] h-[19px] w-[22px]"><path d="M0 0 H22 L11 19Z" fill="#7a7c7e" /></svg>
          </div>
          <div className="-ml-[4px] mt-[1px]"><Spin text="1 pt" w={48} h="h-[53px]" sh="h-[54px]" open /></div>
        </div>
        <div className="flex">
          <Fit w={121} className="ml-[90px] mt-[12px]">Perimeter</Fit>
          <div className="ml-[159px]"><Spin text="0 pt" w={50} /></div>
        </div>
      </div>
      <div className={sec + "flex h-[82px]"}>
        <Fit w={104} className="ml-[43px] mt-[25px] font-bold">Opacity</Fit>
        <div className="ml-[223px] mt-[16px]"><Spin text="100 %" w={77} smt="mt-[5px]" sh="h-[48px]" /></div>
      </div>
      <div className={sec + "flex h-[76px] font-bold"}>
        <Check ml="ml-[49px] mt-[20px]" />
        <Fit w={111} className="ml-[14px] mt-[28px]">Shadow</Fit>
        <Check ml="ml-[100px] mt-[20px]" />
        <Fit w={88} className="ml-[16px] mt-[28px]">Comic</Fit>
      </div>
      <div className={sec + "flex h-[228px] flex-col gap-[9px] pl-[45px] pt-[26px]"}>
        <Btn w={123} cls="w-[480px]">Edit Style</Btn>
        <div className="flex gap-[9px]">
          <Btn w={136} cls="w-[236px]">Copy Style</Btn>
          <Btn w={144} cls="w-[236px]">Paste Style</Btn>
        </div>
        <Btn w={256} cls="w-[480px]">Set as Default Style</Btn>
      </div>
    </div>
  );
}

/* ---------- Footer ---------- */

function Octocat({ bg, cls }: { bg: string; cls: string }) {
  return (
    <svg viewBox="0 0 58 58" className={cls}>
      <rect width="58" height="58" rx="4" fill={bg} />
      <path d="M14 10 Q18 10 21 13 Q29 11 37 13 Q40 10 43 10 Q45 14 43 18 Q47 23 45 29 Q43 37 34 38 Q36 40 36 44 V49 H22 V45 Q15 45 14 38 L12 36 Q16 36 19 41 Q21 42 23 41 Q23 39 25 38 Q15 37 13 29 Q11 23 14 18 Q12 14 14 10Z" fill="#e5e5e5" />
    </svg>
  );
}

function Footer() {
  const sq = "flex h-[57px] w-[57px] shrink-0 items-center justify-center overflow-hidden rounded-[4px] bg-[#959595] ";
  return (
    <div className={"flex h-[112px] shrink-0 items-stretch border-t-2 border-[#c0c0c0] bg-[#e5e5e5] text-[34px] font-bold leading-[111px] text-[#20558f] " + AR}>
      <div className="ml-[965px] flex w-[594px] shrink-0 items-center border-l-2 border-[#c0c0c0] pl-[103px]">
        <Octocat bg="#808080" cls="h-[58px] w-[58px] shrink-0" />
        <Fit w={292} className="ml-[33px]">Fork us on GitHub</Fit>
      </div>
      <div className="flex w-[777px] shrink-0 items-center border-x-2 border-[#c0c0c0] bg-[#cdcdcd] pl-[105px]">
        <svg viewBox="0 0 64 58" className="h-[58px] w-[64px] shrink-0">
          <g fill="#20558f">
            <path d="M7 1 L14 3 Q18 14 34 30 Q44 40 48 50 L38 51 Q34 42 25 32 Q9 15 7 1Z" />
            <path d="M57 1 L50 3 Q46 14 30 30 Q20 40 16 50 L26 51 Q30 42 39 32 Q55 15 57 1Z" />
            <path d="M26 5 Q32 2 38 5 Q37 10 32 15 Q27 10 26 5Z" />
          </g>
          <path d="M20 41 Q2 38 3 50 Q4 56 13 57 M44 41 Q62 38 61 50 Q60 56 51 57" fill="none" stroke="#20558f" strokeWidth="4" />
        </svg>
        <Fit w={460} className="ml-[38px]">#1 Rated Confluence Add-on</Fit>
      </div>
      <div className="ml-auto mr-[28px] flex items-center gap-[27.5px] pb-[5px]">
        <div className={sq}>
          <svg viewBox="0 0 57 57" className="h-[57px] w-[57px]">
            <text x="0" y="38" fontSize="60" fill="#e8e8e8" fontWeight="400" className="font-['Liberation_Serif',serif]">g</text>
            <path d="M33 23 H55 M44 12 V34" stroke="#e8e8e8" strokeWidth="3" />
          </svg>
        </div>
        <div className={sq + "items-end"}><FaFacebookF className="-mb-[1px] ml-[12px] mt-[9px] h-[49px] w-[36px] text-[#e8e8e8]" /></div>
        <div className={sq}><FaTwitter className="mt-[2px] h-[38px] w-[38px] text-[#e8e8e8]" /></div>
        <Octocat bg="#959595" cls="h-[57px] w-[57px] shrink-0" />
        <svg viewBox="0 0 22 22" className="h-[22px] w-[22px]"><path d="M2 2 L20 20 M20 2 L2 20" stroke="#afc3da" strokeWidth="5.5" /></svg>
      </div>
    </div>
  );
}

export default function App() {
  return (
    <div className="flex h-[2160px] w-[3840px] flex-col overflow-hidden bg-[#f5f5f5]">
      <TopBar />
      <div className="flex h-[2112px]">
        <Launcher />
        <div className="flex w-[3710px] flex-col">
          <TabStrip />
          <NavBar />
          <Header />
          <Toolbar />
          <div className="flex h-[1628px] shrink-0">
            <Sidebar />
            <CanvasArea />
            <FormatPanel />
          </div>
          <Footer />
        </div>
      </div>
    </div>
  );
}
